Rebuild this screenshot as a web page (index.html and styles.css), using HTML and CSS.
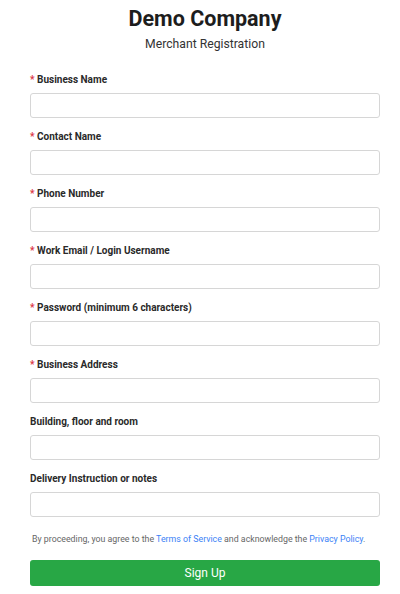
FILE: index.html
```html
<!DOCTYPE html>
<html>
<head>
<meta charset="utf-8">
<link rel="stylesheet" href="styles.css">
</head>
<body>
<div class="page">
  <header class="head">
    <h1 class="title">Demo Company</h1>
    <p class="subtitle">Merchant Registration</p>
  </header>
  <form class="form">
    <div class="field"><label class="label"><span class="req">*</span> Business Name</label><input class="input" type="text"></div>
    <div class="field"><label class="label"><span class="req">*</span> Contact Name</label><input class="input" type="text"></div>
    <div class="field"><label class="label"><span class="req">*</span> Phone Number</label><input class="input" type="text"></div>
    <div class="field"><label class="label"><span class="req">*</span> Work Email / Login Username</label><input class="input" type="text"></div>
    <div class="field"><label class="label"><span class="req">*</span> Password (minimum 6 characters)</label><input class="input" type="password"></div>
    <div class="field"><label class="label"><span class="req">*</span> Business Address</label><input class="input" type="text"></div>
    <div class="field"><label class="label">Building, floor and room</label><input class="input" type="text"></div>
    <div class="field"><label class="label">Delivery Instruction or notes</label><input class="input" type="text"></div>
    <p class="terms">By proceeding, you agree to the <a class="link" href="#">Terms of Service</a> and acknowledge the <a class="link" href="#">Privacy Policy</a>.</p>
    <button class="btn" type="button">Sign Up</button>
  </form>
</div>
</body>
</html>
```
FILE: styles.css
```css
* { box-sizing: border-box; }
html, body { margin: 0; padding: 0; background: #fff; }
body { font-family: Roboto, "Liberation Sans", Arial, sans-serif; color: #222; }
.page { padding: 6px 20px 0 30px; }
.head { text-align: center; }
.title { margin: 0; font-size: 21.5px; line-height: 26px; font-weight: 700; color: #1d1d1d; }
.subtitle { margin: 4px 0 0; font-size: 12.2px; line-height: 16px; color: #333; }
.form { margin-top: 21px; display: flex; flex-direction: column; }
.field { display: flex; flex-direction: column; margin-bottom: 12px; }
.label { font-size: 10px; line-height: 14px; font-weight: 700; color: #2a2a2a; margin-bottom: 6px; }
.req { color: #dc3545; }
.input { height: 25px; width: 100%; border: 1px solid #d6d6d6; border-radius: 3px; background: #fff; padding: 0 8px; font-size: 12px; }
.terms { margin: 4px 0 0; padding-left: 2px; font-size: 8.8px; line-height: 12px; color: #666; text-align: left; }
.link { color: #3b82f6; text-decoration: none; }
.btn { margin-top: 15px; height: 26px; width: 100%; border: none; border-radius: 3px; background: #28a745; color: #fff; font-family: inherit; font-size: 12px; font-weight: 400; }
```
